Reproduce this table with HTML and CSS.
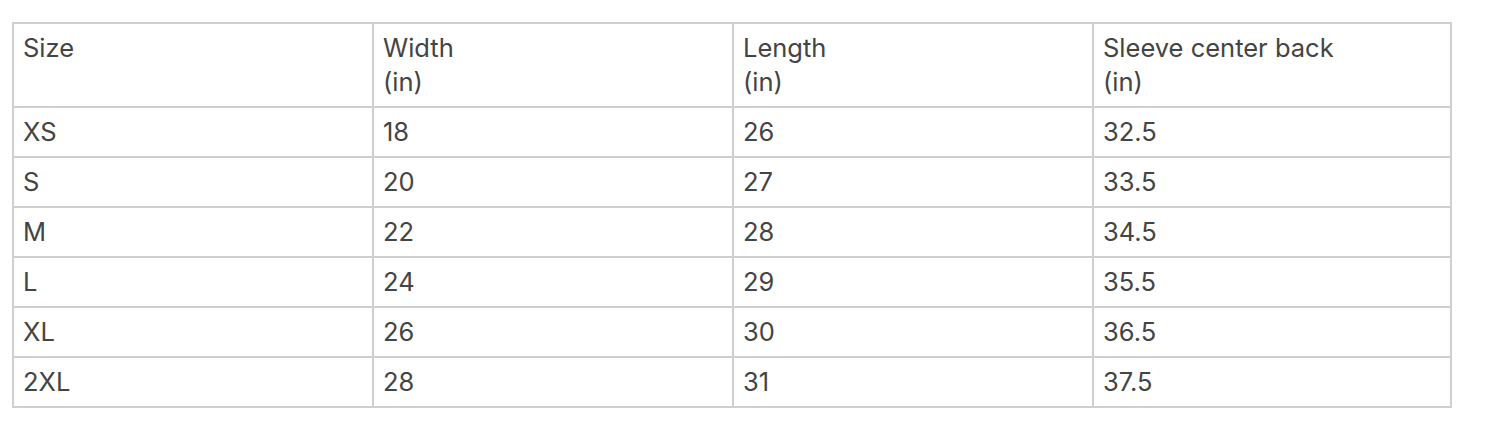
FILE: index.html
```html
<!DOCTYPE html>
<html>
<head>
<meta charset="utf-8">
<link rel="stylesheet" href="styles.css">
</head>
<body>
<div class="wrap">
<table class="size-table">
  <colgroup>
    <col class="c1"><col class="c2"><col class="c3"><col class="c4">
  </colgroup>
  <thead>
    <tr><th>Size</th><th>Width<br>(in)</th><th>Length<br>(in)</th><th>Sleeve center back<br>(in)</th></tr>
  </thead>
  <tbody>
    <tr><td>XS</td><td>18</td><td>26</td><td>32.5</td></tr>
    <tr><td>S</td><td>20</td><td>27</td><td>33.5</td></tr>
    <tr><td>M</td><td>22</td><td>28</td><td>34.5</td></tr>
    <tr><td>L</td><td>24</td><td>29</td><td>35.5</td></tr>
    <tr><td>XL</td><td>26</td><td>30</td><td>36.5</td></tr>
    <tr><td>2XL</td><td>28</td><td>31</td><td>37.5</td></tr>
  </tbody>
</table>
</div>
</body>
</html>
```
FILE: styles.css
```css
html, body { margin: 0; padding: 0; background: #fff; }
.wrap { padding: 22px 12px; }
.size-table {
  width: 1440px;
  table-layout: fixed;
  border-collapse: separate;
  border-spacing: 0;
  border-top: 2px solid #cfcfcf;
  border-left: 2px solid #cfcfcf;
  font-family: Inter, "Noto Sans", sans-serif;
  font-size: 25.5px;
  line-height: 34px;
  color: #444444;
}
.c1 { width: 360px; }
.c2 { width: 360px; }
.c3 { width: 360px; }
.c4 { width: 358px; }
.size-table th, .size-table td {
  text-align: left;
  font-weight: 400;
  vertical-align: top;
  padding: 7px 9px;
  border-right: 2px solid #cfcfcf;
  border-bottom: 2px solid #cfcfcf;
}
```
